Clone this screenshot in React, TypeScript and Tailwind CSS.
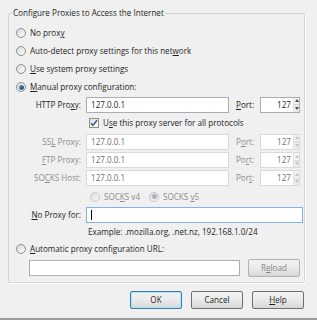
import React from "react";

const font = { fontFamily: '"Open Sans", "Noto Sans", sans-serif' };

const U = ({ children }: { children: React.ReactNode }) => (
  <span className="underline underline-offset-[1px]">{children}</span>
);

const Radio = ({ checked = false, disabled = false }: { checked?: boolean; disabled?: boolean }) => (
  <span
    className={`flex items-center justify-center w-[10px] h-[10px] rounded-full border shrink-0 bg-gradient-to-br from-[#d9d9d9] to-[#fbfbfb] ${
      disabled ? "border-[#c8c8c8]" : "border-[#8e8f8f]"
    }`}
  >
    {checked && (
      <span
        className={`w-[5px] h-[5px] rounded-full ${
          disabled ? "bg-[#a9b4c0]" : "bg-gradient-to-br from-[#5ea3df] to-[#12386a]"
        }`}
      />
    )}
  </span>
);

const Checkbox = () => (
  <span className="flex items-center justify-center w-[10px] h-[10px] border border-[#8e8f8f] bg-gradient-to-br from-[#dedede] to-[#fbfbfb] shrink-0">
    <svg width="8" height="8" viewBox="0 0 8 8">
      <path d="M1 4.2 L3 6.3 L7 1.3" stroke="#3a4f8c" strokeWidth="1.4" fill="none" />
    </svg>
  </span>
);

const Input = ({
  value = "",
  disabled = false,
  className = "",
  focused = false,
}: {
  value?: string;
  disabled?: boolean;
  className?: string;
  focused?: boolean;
}) => (
  <div
    className={`h-[16px] flex items-center bg-white border pl-[4px] shrink-0 ${
      focused ? "border-[#7eb4ea]" : disabled ? "border-[#d9d9d9]" : "border-[#abadb3]"
    } ${disabled ? "text-[#6d6d6d]" : "text-[#1e1e1e]"} ${className}`}
  >
    {focused && <span className="w-px h-[10px] bg-black" />}
    {value}
  </div>
);

const PortBox = ({ disabled = false }: { disabled?: boolean }) => (
  <div
    className={`w-[40px] h-[16px] flex bg-white border shrink-0 ${
      disabled ? "border-[#d9d9d9] text-[#6d6d6d]" : "border-[#abadb3] text-[#1e1e1e]"
    }`}
  >
    <div className="flex-1 flex items-center justify-end pr-[2px]">127</div>
    <div className="w-[6px] flex flex-col border-l border-[#e2e2e2]">
      <div className="flex-1 flex items-center justify-center bg-[#f3f3f3] border-b border-[#d8d8d8]">
        <svg width="4" height="3" viewBox="0 0 4 3">
          <path d="M0 3 L2 0 L4 3Z" fill={disabled ? "#c4c4c4" : "#4d4d4d"} />
        </svg>
      </div>
      <div className="flex-1 flex items-center justify-center bg-[#ececec]">
        <svg width="4" height="3" viewBox="0 0 4 3">
          <path d="M0 0 L2 3 L4 0Z" fill={disabled ? "#c4c4c4" : "#4d4d4d"} />
        </svg>
      </div>
    </div>
  </div>
);

const ProxyRow = ({
  label,
  disabled = false,
  port,
  h,
}: {
  label: React.ReactNode;
  disabled?: boolean;
  port: React.ReactNode;
  h: string;
}) => (
  <div className={`flex items-center ${h}`}>
    <div className={`w-[70px] text-right pr-[5px] shrink-0 ${disabled ? "text-[#8d8d8d]" : ""}`}>{label}</div>
    <Input value="127.0.0.1" disabled={disabled} className="w-[143px]" />
    <div className={`w-[31px] pl-[7px] shrink-0 ${disabled ? "text-[#8d8d8d]" : ""}`}>{port}</div>
    <PortBox disabled={disabled} />
  </div>
);

const Button = ({ children, disabled = false, def = false }: { children: React.ReactNode; disabled?: boolean; def?: boolean }) => (
  <div
    className={`w-[52px] h-[18px] flex items-center justify-center rounded-[2px] border bg-gradient-to-b from-[#f2f2f2] via-[#ebebeb] to-[#d6d6d6] ${
      def ? "border-[#3c7fb1] shadow-[inset_0_0_0_1px_#aee4fb]" : disabled ? "border-[#adb2b5]" : "border-[#707070]"
    } ${disabled ? "text-[#838383]" : "text-[#1e1e1e]"}`}
  >
    {children}
  </div>
);

export default function App() {
  return (
    <div className="w-[317px] h-[320px] bg-[#f0f0f0] text-[#1e1e1e] text-[8.1px] leading-[12px] flex flex-col overflow-hidden" style={font}>
      <div className="pl-[8px] pr-[12px] pt-[7px]">
        <fieldset className="border border-[#d5d5d5] rounded-[2px] shadow-[1px_1px_0_#ffffff] px-0 pb-[4px]">
          <legend className="ml-[3px] px-[1px] leading-[12px]">Configure Proxies to Access the Internet</legend>
          <div className="flex flex-col pt-[4px] pl-[7px]">
            <div className="flex items-center gap-[4px] h-[19px]">
              <Radio />
              <span>No prox<U>y</U></span>
            </div>
            <div className="flex items-center gap-[4px] h-[18px]">
              <Radio />
              <span>Auto-detect proxy settings for this net<U>w</U>ork</span>
            </div>
            <div className="flex items-center gap-[4px] h-[18px]">
              <Radio />
              <span><U>U</U>se system proxy settings</span>
            </div>
            <div className="flex items-center gap-[4px] h-[18px]">
              <Radio checked />
              <span><U>M</U>anual proxy configuration:</span>
            </div>
            <ProxyRow h="h-[17px]" label={<>HTTP Pro<U>x</U>y:</>} port={<><U>P</U>ort:</>} />
            <div className="flex items-center gap-[4px] h-[19px] pl-[73px]">
              <Checkbox />
              <span>U<U>s</U>e this proxy server for all protocols</span>
            </div>
            <ProxyRow h="h-[19px]" disabled label={<>SS<U>L</U> Proxy:</>} port={<>P<U>o</U>rt:</>} />
            <ProxyRow h="h-[18px]" disabled label={<><U>F</U>TP Proxy:</>} port={<>Po<U>r</U>t:</>} />
            <ProxyRow h="h-[18px]" disabled label={<>SO<U>C</U>KS Host:</>} port={<>Por<U>t</U>:</>} />
            <div className="flex items-center h-[19px] pl-[74px] text-[#8d8d8d]">
              <Radio disabled />
              <span className="ml-[4px]">SOC<U>K</U>S v4</span>
              <span className="ml-[9px]"><Radio disabled checked /></span>
              <span className="ml-[4px]">SOCKS <U>v</U>5</span>
            </div>
            <div className="flex items-center h-[17px]">
              <div className="w-[70px] text-right pr-[5px] shrink-0"><U>N</U>o Proxy for:</div>
              <Input focused className="w-[217px]" />
            </div>
            <div className="flex items-center h-[17px] pl-[72px]">Example: .mozilla.org, .net.nz, 192.168.1.0/24</div>
            <div className="flex items-center gap-[4px] h-[17px]">
              <Radio />
              <span><U>A</U>utomatic proxy configuration URL:</span>
            </div>
            <div className="flex items-center h-[21px] pl-[13px]">
              <Input className="w-[211px]" />
              <div className="ml-[8px]">
                <Button disabled>R<U>e</U>load</Button>
              </div>
            </div>
          </div>
        </fieldset>
      </div>
      <div className="flex justify-end gap-[9px] pr-[13px] mt-[8px]">
        <Button def>OK</Button>
        <Button>Cancel</Button>
        <Button><U>H</U>elp</Button>
      </div>
      <div className="flex-1" />
      <div className="h-[2px] bg-[#9a9a9a]" />
    </div>
  );
}
